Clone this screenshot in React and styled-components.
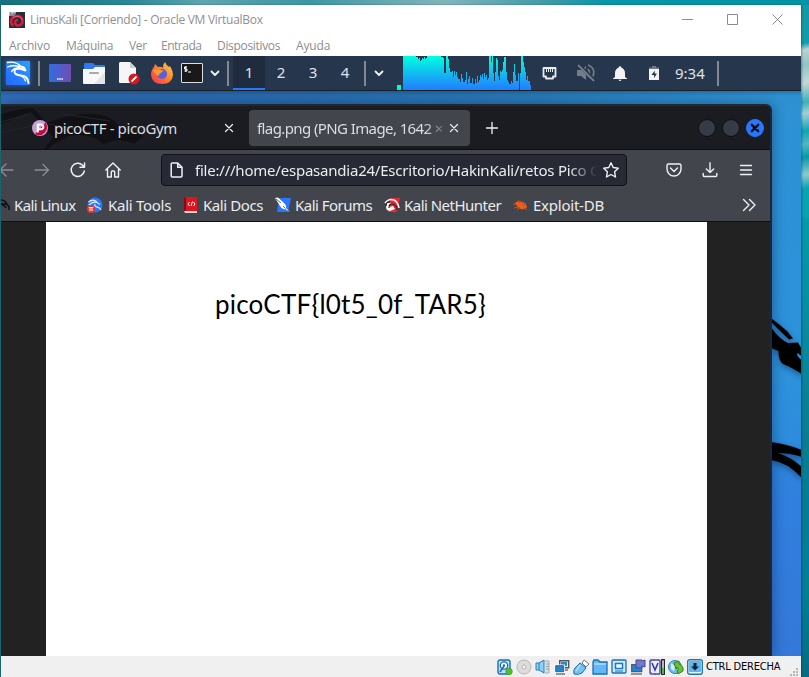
import React from 'react';
import styled, { createGlobalStyle } from 'styled-components';

const Global = createGlobalStyle`
  * { box-sizing: border-box; }
  html, body { margin: 0; overflow: hidden; }
  svg { display: block; flex: none; overflow: visible; }
`;

/* ---------- host desktop and VM window ---------- */

const Desktop = styled.div`
  width: 809px;
  height: 677px;
  padding: 5px 8px 0 1px;
  display: flex;
  background:
    linear-gradient(90deg, #17707f, #2a8797 16%, #5fa5b0 25%, #3e96a3 38%, #82b5bc 55%, #3d9aa6 68%, #0796a9 75%, #0492a5) 0 0 / 809px 5px no-repeat,
    linear-gradient(168deg, #1698a6 0%, #0f9dac 20%, #bcd4d2 23%, #8fc4c6 30%, #c4d8d6 38%, #3cb0bb 47%, #a5d0d0 52%, #0fa5b5 60%, #4fb9c1 66%, #0799ab 72%, #8ecacd 80%, #0aa4b5 86%, #08a0b2 100%) 801px 0 / 8px 218px no-repeat,
    linear-gradient(#0799ac, #078ba0 25%, #077f94 45%, #087c90 60%, #047f97 80%, #086b82) 801px 218px / 8px 459px no-repeat,
    #1b6673;
`;

const VmWindow = styled.div`
  width: 800px;
  display: flex;
  flex-direction: column;
  background: #fff;
  box-shadow: 1px 0 2px rgba(0, 50, 60, 0.4);
`;

const TitleBar = styled.header`
  height: 30px;
  display: flex;
  align-items: center;
  padding: 0 18px 1px 8px;
  font: 12px 'Open Sans', sans-serif;
  letter-spacing: -0.29px;
  color: #8f8f8f;
`;

const TitleText = styled.span`
  margin: 0 auto 0 5px;
  white-space: nowrap;
`;

const CaptionButtons = styled.div`
  display: flex;
  gap: 34px;
`;

const MenuBar = styled.nav`
  height: 21px;
  display: flex;
  padding-left: 8px;
  font: 12px/21px 'Open Sans', sans-serif;
  color: #8e8e8e;
`;

const MenuItem = styled.span`
  width: ${p => p.$w}px;
  letter-spacing: ${p => p.$track}px;
  white-space: nowrap;
`;

/* ---------- Kali panel ---------- */

const KaliPanel = styled.div`
  height: 35px;
  flex: none;
  display: flex;
  align-items: center;
  background: #26374d;
  border-bottom: 1px solid #1a2027;
  font: 15px 'Noto Sans', sans-serif;
  color: #e0e3e6;
`;

const Slot = styled.div`
  width: ${p => p.$w}px;
  height: 34px;
  flex: none;
  display: flex;
  align-items: center;
  justify-content: center;
`;

const Divider = styled.i`
  width: 2px;
  height: 25px;
  flex: none;
  background: #85898f;
`;

const Workspace = styled.button`
  width: 32px;
  height: 34px;
  padding: 0 0 1px;
  border: 0;
  border-bottom: 2px solid ${p => (p.$active ? '#2777ff' : 'transparent')};
  background: ${p => (p.$active ? '#1e2c3e' : 'transparent')};
  color: inherit;
  font: inherit;
`;

const CpuGraph = styled.div`
  width: 134px;
  height: 34px;
  margin-left: 8px;
`;

const Clock = styled.time`
  width: 43px;
  padding: 0 0 1px 1px;
`;

/* ---------- guest desktop ---------- */

const Guest = styled.main`
  height: 565px;
  flex: none;
  position: relative;
  display: flex;
  align-items: flex-end;
  overflow: hidden;
  background:
    linear-gradient(rgba(0, 20, 40, 0.22), transparent 5px),
    linear-gradient(90deg, #316cba, #2b68ad 9%, #286bae 38%, #277ab8 68%, #2d91d1 97%) 0 0 / 100% 14px no-repeat,
    linear-gradient(#2d91d4 0%, #2e92dc 50%, #2d8cdd 62%, #307fde 72%, #3478d9 100%);
`;

const WallpaperArt = styled.svg`
  position: absolute;
  left: 770px;
  top: 192px;
  filter: drop-shadow(1px 3px 3px rgba(0, 20, 60, 0.45));
`;

const Browser = styled.section`
  width: 771px;
  height: 552px;
  position: relative;
  display: flex;
  flex-direction: column;
  border-top: 2px solid #24272e;
  border-right: 2px solid #20263a;
  border-radius: 0 6px 0 0;
  background: #1b1c21;
  box-shadow: 2px 0 12px rgba(0, 20, 50, 0.35);
  font-family: 'Noto Sans', sans-serif;
  font-size: 15px;
  color: #ebecee;
`;

const TabStrip = styled.div`
  height: 43px;
  flex: none;
  display: flex;
  align-items: center;
  padding-top: 1px;
  position: relative;
`;

const TabShade = styled.svg`
  && { overflow: hidden; }
  position: absolute;
  left: 0;
  top: 0;
`;

const Tab = styled.div`
  width: ${p => p.$w}px;
  height: 36px;
  display: flex;
  align-items: center;
  position: relative;
  padding: ${p => p.$pad};
  border-radius: 4px;
  background: ${p => (p.$active ? '#42454c' : 'transparent')};
  letter-spacing: ${p => p.$track}px;
  color: #dcdde0;
`;

const TabLabel = styled.span`
  width: ${p => p.$w}px;
  margin-left: ${p => p.$gap || 0}px;
  overflow: hidden;
  white-space: nowrap;
  ${p => p.$fade && 'mask-image: linear-gradient(90deg, #000 168px, transparent 192px);'}
`;

const WindowButtons = styled.div`
  display: flex;
  gap: 6px;
  margin: 0 6px 0 auto;
`;

const RoundButton = styled.button`
  width: 18px;
  height: 18px;
  padding: 0;
  display: grid;
  place-items: center;
  border: 1px solid ${p => (p.$close ? '#2777ff' : '#0e0f13')};
  border-radius: 50%;
  background: ${p => (p.$close ? '#2777ff' : '#363b47')};
`;

const NavBar = styled.div`
  height: 39px;
  flex: none;
  display: flex;
  align-items: center;
  border-top: 1px solid #0d0e11;
  background: #42454c;
`;

const NavIcon = styled.div`
  width: 16px;
  flex: none;
  margin-right: ${p => p.$after}px;
  padding-top: 2px;
  opacity: ${p => (p.$dim ? 0.42 : 1)};
`;

const UrlBar = styled.div`
  width: 466px;
  height: 32px;
  display: flex;
  align-items: center;
  padding: 0 7px 0 7px;
  margin: 2px 39px 0 0;
  border: 1px solid #101117;
  border-radius: 4px;
  background: #272935;
`;

const UrlText = styled.span`
  width: 402px;
  margin: 0 6px 0 10px;
  overflow: hidden;
  white-space: nowrap;
  letter-spacing: -0.22px;
  mask-image: linear-gradient(90deg, #000 374px, transparent 402px);
`;

const Bookmarks = styled.div`
  height: 34px;
  flex: none;
  display: flex;
  align-items: center;
  padding-top: 1px;
  border-bottom: 1px solid #0d0e11;
  background: #42454c;
`;

const Bookmark = styled.a`
  width: ${p => p.$w}px;
  flex: none;
  display: flex;
  align-items: center;
  gap: ${p => p.$gap}px;
  white-space: nowrap;
  letter-spacing: ${p => p.$track}px;
`;

const Viewer = styled.div`
  flex: 1;
  padding: 0 63px 0 45px;
  display: flex;
  background: #222;
`;

const FlagImage = styled.div`
  flex: 1;
  padding: 66px 0 0 169px;
  background: #fff;
  color: #000;
  font: 26px/32px Lato, sans-serif;
  letter-spacing: 0.2px;
`;

/* ---------- VM status bar ---------- */

const StatusBar = styled.footer`
  height: 21px;
  flex: none;
  display: flex;
  align-items: center;
  justify-content: flex-end;
  padding-right: 2px;
  gap: 3px;
  background: #f0f0f0;
  font: 11px 'DejaVu Sans Condensed', 'DejaVu Sans', sans-serif;
  letter-spacing: -0.2px;
  color: #000;
`;

const HostKey = styled.span`
  width: 83px;
  margin-left: -1px;
  padding-left: 1px;
  white-space: nowrap;
`;

const GripCorner = styled.div`
  align-self: flex-end;
  margin-left: -1px;
`;

/* ---------- icons ---------- */

const Svg = ({ w = 16, h = w, children, ...rest }) => (
  <svg width={w} height={h} viewBox={`0 0 ${w} ${h}`} fill="none" {...rest}>{children}</svg>
);

const Line = ({ d, w = 16, h = w, s = 1.3, c = '#f1f1f3' }) => (
  <Svg w={w} h={h}><path d={d} stroke={c} strokeWidth={s} strokeLinecap="round" strokeLinejoin="round" /></Svg>
);

const VmIcon = () => (
  <Svg>
    <path d="M0 0h16v16H0z" fill="#272d39" />
    <path d="M0 0h7l-1 4H0z" fill="#b9bcc2" />
    <path d="M1 1h1M4 2h2M1 3h3" stroke="#555" />
    <path d="M4 14C0 9 3 3.500 9 4c6 1 6 9 0 9.500-4 0-4-6 0-5.500" stroke="#d51e3f" strokeWidth="2.600" />
    <path d="M4 6c3-3 8-2 9 2" stroke="#ff6b82" strokeWidth=".8" />
  </Svg>
);

const KaliLogo = () => (
  <Svg w={24}>
    <defs>
      <linearGradient id="kali" x1="1" y1="0" x2="0" y2="1"><stop stopColor="#25a3fc" /><stop offset=".5" stopColor="#2781ff" /><stop offset="1" stopColor="#2468ff" /></linearGradient>
      <filter id="glow" x="-30%" y="-30%" width="160%" height="160%"><feGaussianBlur stdDeviation="2" /></filter>
    </defs>
    <rect width="24" height="24" fill="#2777ff" opacity=".7" filter="url(#glow)" />
    <rect width="24" height="24" rx="1" fill="url(#kali)" />
    <g stroke="#fff" strokeLinecap="round" strokeLinejoin="round">
      <path d="M1.500 1.500Q9 0 14 4.500M1.500 6Q8 3.500 14 6M5.500 10.500Q8 7 13.500 6.500" strokeWidth="1.300" />
      <path d="M13 5l5 1.500 1.500 3-4-1.500Q8 7 8.500 11q.5 3 6.500 3.500Q22 15 22.500 22" strokeWidth="1.900" />
      <path d="M15 15q3.500 1.500 4.500 5" strokeWidth="1.200" />
    </g>
  </Svg>
);

const DesktopIcon = () => (
  <Svg w={22} h={18}>
    <defs><linearGradient id="desk"><stop stopColor="#2f6ee4" /><stop offset="1" stopColor="#734bb1" /></linearGradient></defs>
    <rect width="22" height="18" rx="1" fill="url(#desk)" />
    <path d="M8 15h6" stroke="#fff" strokeWidth="1.6" strokeDasharray="1.5 .7" />
  </Svg>
);

const FolderIcon = () => (
  <Svg w={22} h={21}>
    <path d="M1 1q0-1 1-1h8l2 2h9q1 0 1 1v6H1z" fill="#2f78ee" />
    <path d="M0 6h10l2-2h10v16q0 1-1 1H1q-1 0-1-1z" fill="#f8f8f8" />
    <path d="M22 9v11q0 1-1 1H11z" fill="#e4e4e4" />
    <path d="M7 10h8" stroke="#aaa" strokeWidth="2" strokeLinecap="round" />
  </Svg>
);

const EditorIcon = () => (
  <Svg w={21} h={22}>
    <path d="M1 0h10l6 6v15H1q-1 0-1-1V1z" fill="#f6f6f6" />
    <path d="M11 0v6h6z" fill="#cfcfcf" />
    <circle cx="15" cy="17" r="5.5" fill="#d3181e" />
    <path d="M12.5 19.5l5-5" stroke="#fff" strokeWidth="1.8" />
  </Svg>
);

const FirefoxIcon = () => (
  <Svg w={22}>
    <defs><linearGradient id="fox" x1="1" y1="0" x2="0" y2="1"><stop stopColor="#ffe14a" /><stop offset=".5" stopColor="#ff7a2e" /><stop offset="1" stopColor="#f72e58" /></linearGradient></defs>
    <path d="M3 5L4 2l3 3q3-1 5 1 0-4 2-6 1 3 4 5l1-1q3 5 3 9-1 9-11 9T0 13q0-5 3-8z" fill="url(#fox)" />
    <circle cx="11" cy="12" r="5" fill="#5262dd" />
    <path d="M2 8q5-2 11 1-2 0-3 2-2 0-2 3-4-1-6-6z" fill="#ff9a35" />
  </Svg>
);

const TerminalIcon = () => (
  <Svg w={22} h={20}>
    <rect x=".5" y=".5" width="21" height="19" rx=".5" fill="#191919" stroke="#dedede" />
    <path d="M6 4H3.500v2H6v2H3.500M4.800 3v6M7 9h3" stroke="#fff" strokeWidth="1" />
  </Svg>
);

const Chevron = () => <Line w={8} h={5} d="M.5.5L4 4 7.500.5" s={1.8} />;

const LOADS = [
  34, 34, 34, 34, 34, 34, 34, 34, 34, 34, 34, 34, 34, 33, 33, 31, 32, 29, 30, 32, 31, 33, 31, 32,
  34, 34, 34, 34, 34, 34, 34, 34, 34, 34, 34, 34, 34, 34, 33, 33, 32, 17, 17, 34, 34, 31, 22, 18, 18, 19,
  13, 19, 15, 18, 13, 11, 11, 8, 16, 12, 8, 8, 10, 18, 6, 11, 14, 7, 7, 12, 6, 6, 11, 7, 14, 8,
  10, 15, 13, 16, 11, 17, 13, 15, 10, 12, 34, 34, 28, 34, 17, 9, 18, 32, 30, 14, 10, 19, 18, 20, 28,
  33, 33, 18, 10, 8, 6, 6, 9, 7, 18, 26, 15, 9, 9, 17, 0, 17, 34, 34, 28, 23, 18, 10, 14, 9, 9, 5,
];

const CpuBars = () => (
  <Svg w={134} h={34}>
    <defs><linearGradient id="cpu" gradientUnits="userSpaceOnUse" x1="0" y1="0" x2="0" y2="34"><stop stopColor="#00ffe1" /><stop offset="1" stopColor="#237cff" /></linearGradient></defs>
    <path d="M0 29h4v5H0z" fill="#00f6dd" />
    <path d={LOADS.map((v, i) => `M${i + 6} 34v${-v}h1v${v}z`).join('')} fill="url(#cpu)" shapeRendering="crispEdges" />
  </Svg>
);

const EthernetIcon = () => (
  <Svg w={15} h={13}>
    <path d="M1.500 1h12v8.500h-2.500v2H4v-2H1.500z" stroke="#e9eaec" strokeWidth="1.8" strokeLinejoin="round" />
    <path d="M4.500 2v3m2-3v3m2-3v3m2-3v3" stroke="#e9eaec" />
  </Svg>
);

const MutedIcon = () => (
  <Svg w={18} h={18}>
    <path d="M0 6h4l5-4v14l-5-4H0z" fill="#747d89" />
    <path d="M11 5q3 4 0 8M11 1q9 4 4 13" stroke="#747d89" strokeWidth="1.7" />
    <path d="M1 0l17 17" stroke="#26374d" strokeWidth="3.500" />
    <path d="M1 1l16 16" stroke="#747d89" strokeWidth="1.8" />
  </Svg>
);

const BellIcon = () => (
  <Svg w={14} h={15}>
    <path d="M5.700 1.500a1.300 1.300 0 012.600 0Q12 3 12 7v4l2 1.500v.5H0v-.5L2 11V7q0-4 3.700-5.500zM5.500 13.700h3Q8 15 7 15t-1.500-1.300z" fill="#f3f3f3" />
  </Svg>
);

const BatteryIcon = () => (
  <Svg w={10} h={14}>
    <path d="M3 0h4v1.500h3V4H0V1.500h3z" fill="#707a86" />
    <path d="M0 3h10v11H0z" fill="#f3f3f3" />
    <path d="M5.700 4.500L2.500 9H5v3l3-4.500H5.700z" fill="#26374d" />
  </Svg>
);

const PicoIcon = () => (
  <Svg>
    <circle cx="8" cy="8" r="8" fill="#c7a0d2" />
    <path d="M13.500 2.500A8 8 0 013 14z" fill="#c3093b" />
    <path d="M5.800 12.500v-8H9a2.300 2.300 0 010 4.700H6" stroke="#fff" strokeWidth="2" />
  </Svg>
);

const KaliToolsIcon = () => (
  <Svg>
    <circle cx="8" cy="8" r="7.500" fill="#2777ff" />
    <path d="M1.500 5Q6 1.500 10 5M2 8q4-4 8-2.500l3 2M8 7q-1 2.500 2 3t4 3" stroke="#d9e9ff" strokeWidth="1.300" />
    <circle cx="4" cy="12" r="4" fill="#e7352f" />
    <path d="M1.800 10.500h4.500M3 10.500V14m2-3.500V14" stroke="#fff" />
  </Svg>
);

const DocsIcon = () => (
  <Svg w={14} h={16}>
    <path d="M1 0h12v14H1z" fill="#e0141f" />
    <path d="M0 1l2-1v14H0z" fill="#7a0f1c" />
    <path d="M0 14h13v2H1z" fill="#e4d5d0" />
    <path d="M5.500 5L4 7l1.500 2m3-4.500L7 9m2.500-4L11 7 9.500 9" stroke="#fff" />
  </Svg>
);

const ForumsIcon = () => (
  <Svg>
    <path d="M4 1h12l-3 14H2z" fill="#2777ff" />
    <path d="M0 1l3-.5 6 5.500q3 3 2 5l4 4-5-3q-3 1-5-3z" fill="#fff" />
    <path d="M1 2l5 4M8 9l2.500 2.500" stroke="#3c4048" strokeWidth=".8" />
  </Svg>
);

const NetHunterIcon = () => (
  <Svg>
    <path d="M6 1h10l-3 14H4z" fill="#e92632" />
    <path d="M1 6q4-5 9-3 4 2 5 8" stroke="#fff" strokeWidth="1.500" />
    <path d="M3 6q-3 7 3 8l5-2-2-3-3 1V7l3-1z" fill="#fff" />
    <path d="M5 11q0-5 4-4 4 2 4 6M2 9q0-4 4-5" stroke="#25272d" strokeWidth="1.200" />
  </Svg>
);

const ExploitIcon = () => (
  <Svg w={15} h={14}>
    <path d="M2 5q3-3 7-1 4 1 5 5-1 3-6 2-4-1-6-6z" fill="#ef5f16" />
    <path d="M0 6l5 1m-4 3l5-1m-2 3l3-3M5 2l2 3m3-2l-1 3m4-1l-3 3m4 4l-3-2" stroke="#b84f21" />
  </Svg>
);

const EdgeDragonIcon = () => (
  <Svg w={9} h={16}>
    <path d="M-1 3q5 0 7 4M-1 7q8-1 9 3v3M-1 7q4 0 6 4" stroke="#101114" strokeWidth="1.6" />
  </Svg>
);

const CloseMark = () => <Line w={8} d="M.5.5l7 7m0-7l-7 7" s={1.2} />;

const B = '#1a6fb5';
const Status = {
  disk: <Svg><rect x="1" y="1" width="12" height="14" rx="2" fill="#b6e2fb" stroke={B} strokeWidth="1.4" /><circle cx="7" cy="6.500" r="3.700" fill="#fff" stroke={B} strokeWidth="1.3" /><circle cx="7" cy="6.500" r="1.200" fill={B} /><path d="M3 13l4-6" stroke={B} strokeWidth="1.500" /><circle cx="12" cy="12.500" r="3.300" fill="#4fbf2d" stroke="#36951b" strokeWidth=".6" /></Svg>,
  cd: <Svg><circle cx="8" cy="8" r="7" fill="#dcdcdc" stroke="#b5b5b5" /><circle cx="8" cy="8" r="2" fill="#f4f4f4" stroke="#b5b5b5" /></Svg>,
  audio: <Svg><path d="M10 2h4v12h-4" fill="#d8dde0" stroke="#a6b0b5" /><path d="M11 5h3m-3 2.500h3m-3 2.500h3" stroke="#98a3a9" /><path d="M1 4h3l5-3v13l-5-3H1z" fill="#8ed0f6" stroke="#287eba" /><path d="M4 4v7" stroke="#287eba" /></Svg>,
  net: <Svg><path d="M5.700 1.700h9v7h-9z" fill="#eee" stroke="#555" strokeWidth="1.400" /><path d="M7 3h6v4H7z" fill="#2d85cf" /><path d="M1.700 6.700h8v6h-8z" fill="#2284cf" stroke="#fff" strokeWidth="2.400" /><path d="M1.700 6.700h8v6h-8z" fill="#2284cf" stroke="#446071" /><path d="M2 15h9M11 11h3" stroke="#767676" strokeWidth="1.400" /></Svg>,
  usb: <Svg><path d="M9 4l2-3 5 4-3 3z" fill="#fff" stroke="#777" /><path d="M7 4l6 5-4 5q-3 2-8 1-1-4 1-6z" fill="#78c2f3" stroke={B} /><path d="M7 6l-4 6" stroke="#d8f0ff" /></Svg>,
  folder: <Svg><path d="M1 15V3l1-2h4l2 2h7v12z" fill="#62b8f6" stroke={B} strokeWidth="1.300" /><path d="M2 5h12" stroke="#d6f0ff" /></Svg>,
  display: <Svg><rect x="1" y="1" width="14" height="13" rx="1" fill="#c9edff" stroke={B} strokeWidth="1.300" /><path d="M4.500 4.500h7v5h-7z" fill="#fff" stroke="#1679cd" strokeWidth="1.500" /><path d="M4 12h8" stroke={B} /></Svg>,
  record: <Svg><path d="M1.700 5.700h10v7h-10z" fill="#2088d5" stroke="#50606a" strokeWidth="1.300" /><path d="M1 15h11" stroke="#777" strokeWidth="1.500" /><path d="M6 1h6v1l3-1v7l-3-1v2H6z" fill="#7379d3" stroke="#424893" /></Svg>,
  cpu: <Svg><rect x="1" y="1" width="10" height="14" rx="1" fill="#ededfc" stroke="#5256a5" strokeWidth="1.500" /><path d="M3 4l3 7 3-7" stroke="#363c9d" strokeWidth="1.600" /><path d="M2 3V1m3 1V0m4 2V0M2 15v-2m4 3v-2m4 2v-2" stroke="#5256a5" /><rect x="12.700" y=".7" width="2.600" height="14.600" fill="#fff" stroke="#111" strokeWidth="1.200" /><path d="M14 9v6" stroke="#3fc52a" strokeWidth="2" /></Svg>,
  mouse: <Svg><circle cx="7" cy="8" r="6.500" fill="#71bff0" stroke="#2d7dad" /><path d="M3 4l4 3-1 5-3-2z" fill="#d1edfc" /><path d="M6 4l5-2v3q5 2 4 7l-5 3-1-3q3-2 0-4l-1 2z" fill="#62c436" stroke="#377f22" /></Svg>,
  key: <Svg><rect x=".7" y=".7" width="14.600" height="14.600" rx="2" fill="#e6f6fd" stroke="#2477ad" strokeWidth="1.400" /><rect x="2" y="2" width="12" height="11" rx="1" fill="#62b7e8" /><path d="M6.500 4h3v3.500H12l-4 4-4-4h2.500z" fill="#09233c" /></Svg>,
};

const Grip = () => (
  <Svg w={9}>
    <path d="M6 0h2v2H6zM3 3h2v2H3zM6 3h2v2H6zM0 6h2v2H0zM3 6h2v2H3zM6 6h2v2H6z" fill="#b6b6b6" />
  </Svg>
);

const MENU = [['Archivo', 57, -0.12], ['Máquina', 63, -0.3], ['Ver', 32, -0.3], ['Entrada', 56, -0.5], ['Dispositivos', 79, -0.32], ['Ayuda', 40, -0.15]];

const BOOKMARKS = [
  ['Kali Linux', EdgeDragonIcon, 86, -0.6, 4],
  ['Kali Tools', KaliToolsIcon, 97, -0.28, 5],
  ['Kali Docs', DocsIcon, 91, -0.42, 5],
  ['Kali Forums', ForumsIcon, 109, -0.53, 4],
  ['Kali NetHunter', NetHunterIcon, 129, -0.52, 4],
  ['Exploit-DB', ExploitIcon, 229, -0.23, 5],
];

export default function App() {
  return (
    <Desktop>
      <Global />
      <VmWindow>
        <TitleBar>
          <VmIcon />
          <TitleText>LinusKali [Corriendo] - Oracle VM VirtualBox</TitleText>
          <CaptionButtons>
            <Svg w={11}><path d="M0 5.500h11" stroke="#8b8b8b" /></Svg>
            <Svg w={11}><path d="M.5.5h10v10H.5z" stroke="#8b8b8b" /></Svg>
            <Svg w={11}><path d="M.5.5l10 10m0-10l-10 10" stroke="#8b8b8b" /></Svg>
          </CaptionButtons>
        </TitleBar>
        <MenuBar>
          {MENU.map(([name, w, track]) => <MenuItem key={name} $w={w} $track={track}>{name}</MenuItem>)}
        </MenuBar>

        <KaliPanel>
          <Slot $w={34}><KaliLogo /></Slot>
          <Slot $w={8}><Divider /></Slot>
          <Slot $w={34}><DesktopIcon /></Slot>
          <Slot $w={34}><FolderIcon /></Slot>
          <Slot $w={37}><EditorIcon /></Slot>
          <Slot $w={28}><FirefoxIcon /></Slot>
          <Slot $w={32}><TerminalIcon /></Slot>
          <Slot $w={14}><Chevron /></Slot>
          <Slot $w={11}><Divider /></Slot>
          {[1, 2, 3, 4].map(n => <Workspace key={n} $active={n === 1}>{n}</Workspace>)}
          <Slot $w={7}><Divider /></Slot>
          <Slot $w={21}><Chevron /></Slot>
          <CpuGraph><CpuBars /></CpuGraph>
          <Slot $w={37}><EthernetIcon /></Slot>
          <Slot $w={36}><MutedIcon /></Slot>
          <Slot $w={32}><BellIcon /></Slot>
          <Slot $w={36}><BatteryIcon /></Slot>
          <Slot $w={2} />
          <Clock>9:34</Clock>
          <Divider />
        </KaliPanel>

        <Guest>
          <WallpaperArt width="31" height="190" viewBox="0 0 31 190">
            <path d="M0 36.500V35q9 7 16 13l6 7.500-4 1Q9 48 0 39z" fill="#000" />
            <path d="M0 44q8 12 17 16l10-.5 4 7v25Q24 86 12 81 7 77 7.500 68L0 65z" fill="#000" />
            <path d="M26 71q1 4 5 6v-4q-2 0-4-3z" fill="#2d8fdb" />
            <path d="M0 159q16 2 31 8v7q-12-4-24-4 13 4 24 14v11Q16 179 0 177z" fill="#000" />
          </WallpaperArt>
          <Browser>
            <TabStrip>
              <TabShade width="200" height="43" viewBox="0 0 200 43">
                <path d="M0 8q15-5 32-6l14 15q28-12 54-8 13 2 19 13l24 8-10 8q-18-8-30 1-12-13-35-9l-15 8-13 12H38l14-19L30 6 0 18z" fill="#0c0d10" opacity=".65" />
                <path d="M0 16l28-8M0 27l38-9M48 18l40 8M62 8l47 7" stroke="#24262c" fill="none" />
              </TabShade>
              <Tab $w={248} $pad="0 16px 0 31px" $track={-0.4}>
                <PicoIcon />
                <TabLabel $w={171} $gap={6}>picoCTF - picoGym</TabLabel>
                <CloseMark />
              </Tab>
              <Tab $active $w={221} $pad="0 12px 0 8px" $track={-0.6}>
                <TabLabel $w={193} $fade>flag.png (PNG Image, 1642 × 1095)</TabLabel>
                <CloseMark />
              </Tab>
              <Slot $w={43}><Line w={12} d="M6 .5v11M.5 6h11" /></Slot>
              <WindowButtons>
                <RoundButton />
                <RoundButton />
                <RoundButton $close><Line w={8} d="M.8.8l6.400 6.400m0-6.400L.8 7.200" s={2.4} c="#0c0f16" /></RoundButton>
              </WindowButtons>
            </TabStrip>
            <NavBar>
              <NavIcon $dim $after={19}><Line d="M12 8H-1M5 2l-6 6 6 6" /></NavIcon>
              <NavIcon $dim $after={18}><Line d="M-1 8h13M7 2.500L12.500 8 7 13.500" /></NavIcon>
              <NavIcon $after={19}><Line d="M14.300 9A6.600 6.600 0 1112.500 3.200L14.500 5V1M14.500 5.200h-4.500" s={1.5} /></NavIcon>
              <NavIcon $after={40}><Line d="M.8 8L8 1l7.200 7M2.500 7v8h3.800v-5q0-1 1-1h1.400q1 0 1 1v5h3.800V7" s={1.4} /></NavIcon>
              <UrlBar>
                <Line d="M3.200 1h5.500L13 5.300V14q0 1-1 1H3.200q-1 0-1-1V2q0-1 1-1zM8.700 1v4.300H13" s={1.5} />
                <UrlText>file:///home/espasandia24/Escritorio/HakinKali/retos Pico CTF</UrlText>
                <Line d="M8 .8l2.200 4.700 5.100.7-3.700 3.600.9 5.200L8 12.500 3.500 15l.9-5.200L.7 6.200l5.100-.7z" s={1.4} />
              </UrlBar>
              <NavIcon $after={20}><Line d="M2.500 2h11q1.500 0 1.500 1.500V7A7 7 0 011 7V3.500Q1 2 2.500 2zM4.500 6L8 9.400 11.500 6" s={1.4} /></NavIcon>
              <NavIcon $after={20}><Line d="M8 .8v9.500M4.300 7L8 10.500 11.700 7M1.200 11.500v2q0 1 1 1h11.600q1 0 1-1v-2" s={1.4} /></NavIcon>
              <NavIcon $after={0}><Line d="M2.500 3.500h11m-11 4.500h11m-11 4.500h11" s={1.3} /></NavIcon>
            </NavBar>
            <Bookmarks>
              {BOOKMARKS.map(([name, Icon, w, track, gap]) => (
                <Bookmark key={name} $w={w} $track={track} $gap={gap}><Icon />{name}</Bookmark>
              ))}
              <Line w={14} h={12} d="M1.500.5L7 6l-5.500 5.500M7.500.5L13 6l-5.500 5.500" s={1.4} />
            </Bookmarks>
            <Viewer>
              <FlagImage>{'picoCTF{l0t5_0f_TAR5}'}</FlagImage>
            </Viewer>
          </Browser>
        </Guest>

        <StatusBar>
          {Object.entries(Status).map(([name, icon]) => <React.Fragment key={name}>{icon}</React.Fragment>)}
          <HostKey>CTRL DERECHA</HostKey>
          <GripCorner><Grip /></GripCorner>
        </StatusBar>
      </VmWindow>
    </Desktop>
  );
}
